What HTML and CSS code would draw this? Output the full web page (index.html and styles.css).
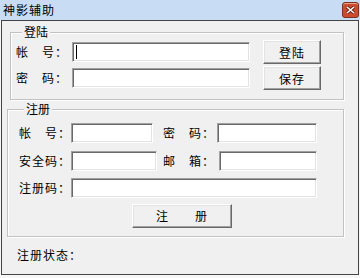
FILE: index.html
```html
<!DOCTYPE html>
<html>
  <head>
    <meta charset="utf-8">
    <meta name="viewport" content="width=device-width, initial-scale=1.0">
    <title>神影辅助</title>
    <link rel="stylesheet" href="styles.css">
  </head>
  <body>
    <div class="titleBar">
      <span class="titleText">神影辅助</span>
      <div class="closeBtn">
        <svg width="9" height="8" viewBox="0 0 9 8"><path d="M1 1 L8 7 M8 1 L1 7" stroke="#5a1a10" stroke-width="3"/><path d="M1 1 L8 7 M8 1 L1 7" stroke="#fff" stroke-width="1.6"/></svg>
      </div>
    </div>
    <div class="client">
      <fieldset class="group loginGroup">
        <legend>登陆</legend>
        <div class="loginRow">
          <span class="lbl">帐　号：</span>
          <div class="field wide"><span class="caret"></span></div>
          <div class="btn small">登陆</div>
        </div>
        <div class="loginRow">
          <span class="lbl">密　码：</span>
          <div class="field wide"></div>
          <div class="btn small">保存</div>
        </div>
      </fieldset>
      <fieldset class="group regGroup">
        <legend>注册</legend>
        <div class="regGrid">
          <span class="lbl">帐　号：</span>
          <div class="field f1"></div>
          <span class="lbl lbl2">密　码：</span>
          <div class="field"></div>

          <span class="lbl">安全码：</span>
          <div class="field"></div>
          <span class="lbl lbl2">邮　箱：</span>
          <div class="field f4"></div>

          <span class="lbl">注册码：</span>
          <div class="field full"></div>

          <div class="btn regBtn">注　　册</div>
        </div>
      </fieldset>
      <div class="status">注册状态：</div>
    </div>
  </body>
</html>
```
FILE: styles.css
```css
html, body {
  margin: 0;
  padding: 0;
}
body {
  width: 360px;
  height: 278px;
  background-color: #f6f6f6;
  font-family: "Noto Sans CJK SC", "Liberation Sans", sans-serif;
  font-size: 12px;
  color: #000;
  overflow: hidden;
}
.titleBar {
  height: 20px;
  display: flex;
  align-items: center;
  justify-content: space-between;
  padding: 0 1px 0 3px;
  background-color: #c8ddf3;
}
.titleText {
  line-height: 14px;
  letter-spacing: 1px;
}
.closeBtn {
  flex: none;
  width: 17px;
  height: 16px;
  margin-top: -1px;
  box-sizing: border-box;
  display: flex;
  align-items: center;
  justify-content: center;
  border: 1px solid #7a3022;
  border-radius: 3px;
  background-color: #cc4b2e;
  box-shadow: inset 0 1px #eaa58d;
}
.client {
  height: 255px;
  margin: 0 1px;
  box-sizing: border-box;
  border: 1px solid #444;
  background-color: #f0f0f0;
  display: flex;
  flex-direction: column;
}
.group {
  margin: 0;
  border: 1px solid #c2c2c2;
  box-shadow: inset 1px 1px #fff, 1px 1px #fff;
}
.group legend {
  padding: 0 2px;
  line-height: 14px;
  background-color: #f0f0f0;
}
.loginGroup {
  margin: 4px 14px 0 8px;
  padding: 1px 0 9px 5px;
}
.loginGroup legend {
  margin-left: 6px;
}
.regGroup {
  margin: 2px 14px 0 5px;
  padding: 7px 0 6px 11px;
}
.regGroup legend {
  margin-left: 5px;
}
.lbl {
  line-height: 14px;
  letter-spacing: 1px;
  white-space: nowrap;
}
.field {
  height: 20px;
  box-sizing: border-box;
  background-color: #fff;
  border: 1px solid;
  border-color: #a0a0a0 #fff #fff #a0a0a0;
  box-shadow: inset 1px 1px #696969, inset -1px -1px #e3e3e3;
  display: flex;
  align-items: center;
  padding-left: 3px;
}
.caret {
  width: 1px;
  height: 14px;
  background-color: #000;
}
.btn {
  height: 24px;
  box-sizing: border-box;
  border: 1px solid;
  border-color: #fff #696969 #696969 #fff;
  box-shadow: inset -1px -1px #a0a0a0, inset 1px 1px #e3e3e3;
  background-color: #f0f0f0;
  display: flex;
  align-items: center;
  justify-content: center;
  letter-spacing: 1px;
}
.loginRow {
  display: flex;
  align-items: center;
  height: 24px;
}
.loginRow + .loginRow {
  margin-top: 2px;
}
.loginRow .lbl {
  width: 56px;
}
.field.wide {
  width: 178px;
}
.btn.small {
  width: 58px;
  margin-left: 13px;
}
.regGrid {
  display: grid;
  grid-template-columns: 52px 86px 60px 100px;
  grid-template-rows: 20px 19px 20px 24px;
  row-gap: 8px;
  align-items: center;
}
.regGrid .f1 {
  width: 82px;
}
.regGrid .f4 {
  margin-left: 2px;
}
.lbl2 {
  margin-left: 6px;
}
.field.full {
  grid-column: 2 / 5;
}
.regBtn {
  grid-column: 2 / 5;
  width: 100px;
  margin: -5px 0 0 61px;
}
.status {
  margin: 11px 0 0 15px;
  line-height: 14px;
  letter-spacing: 1px;
}
```
